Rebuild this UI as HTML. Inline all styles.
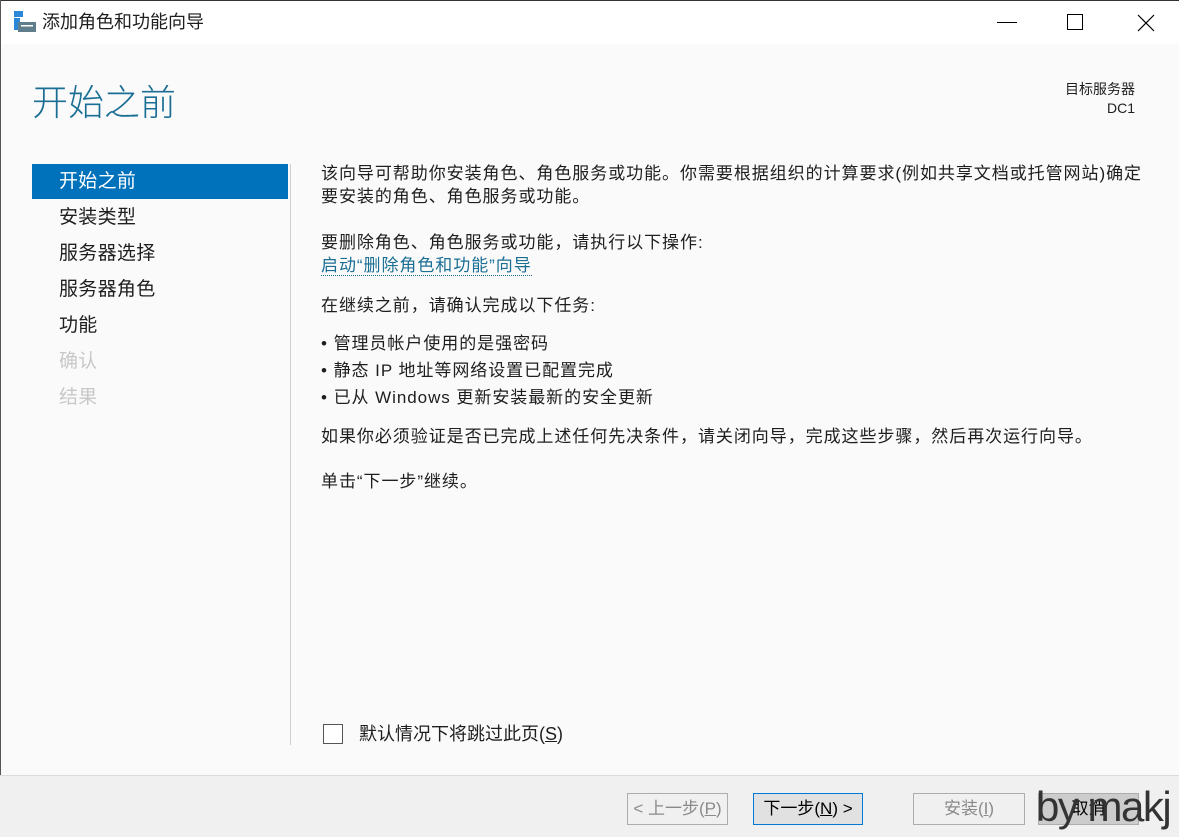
<!DOCTYPE html>
<html><head><meta charset="utf-8"><style>
*{margin:0;padding:0;box-sizing:border-box}
body{width:1179px;height:837px;position:relative;overflow:hidden;background:#fafafa;font-family:"Liberation Sans","Noto Sans CJK SC",sans-serif;color:#1e1e1e}
.a{position:absolute;white-space:nowrap}
.tb{position:absolute;left:0;top:0;width:1179px;height:44px;background:#fff;border-top:1px solid #333}
.nav{position:absolute;left:59px;font-size:19px;letter-spacing:0.3px;line-height:22px}
.t{position:absolute;left:321px;font-size:17px;letter-spacing:0.95px;line-height:20px;white-space:nowrap}
.btn{position:absolute;top:793px;height:32px;border:1px solid #adadad;background:#f0f0f0;font-size:17px;text-align:center;line-height:30px;color:#8a8a8a}
</style></head><body>
<div class="tb"></div>
<div style="position:absolute;left:0;top:0;width:1px;height:837px;background:#555"></div>
<svg class="a" style="left:13px;top:10px" width="24" height="24" viewBox="0 0 24 24"><rect x="1" y="1" width="9" height="6" fill="#2b88d8"/><rect x="1" y="8" width="6" height="12" fill="#2b88d8"/><rect x="5" y="12" width="18" height="10" fill="#607d8b"/><rect x="8" y="15" width="12" height="1.5" fill="#fff"/></svg>
<div class="a" style="left:42px;top:11px;font-size:18px;line-height:22px">添加角色和功能向导</div>
<div class="a" style="left:997px;top:22px;width:20px;height:1px;background:#000"></div>
<div class="a" style="left:1067px;top:14px;width:16px;height:16px;border:1px solid #000"></div>
<svg class="a" style="left:1137px;top:14px" width="18" height="18"><path d="M1 1L17 17M17 1L1 17" stroke="#000" stroke-width="1.2"/></svg>
<div class="a" style="left:32px;top:80px;font-size:36px;line-height:46px;color:#1a6e94;font-weight:300">开始之前</div>
<div class="a" style="right:44px;top:80px;font-size:14px;line-height:19px;text-align:right">目标服务器<br>DC1</div>
<div class="a" style="left:32px;top:164px;width:256px;height:35px;background:#0072bc"></div>
<div class="nav" style="top:171px;color:#fff">开始之前</div>
<div class="nav" style="top:207px">安装类型</div>
<div class="nav" style="top:243px">服务器选择</div>
<div class="nav" style="top:279px">服务器角色</div>
<div class="nav" style="top:315px">功能</div>
<div class="nav" style="top:351px;color:#c8c8c8">确认</div>
<div class="nav" style="top:387px;color:#c8c8c8">结果</div>
<div class="a" style="left:290px;top:164px;width:1px;height:581px;background:#cfcfcf"></div>
<div class="t" style="top:164px">该向导可帮助你安装角色、角色服务或功能。你需要根据组织的计算要求(例如共享文档或托管网站)确定</div>
<div class="t" style="top:187px">要安装的角色、角色服务或功能。</div>
<div class="t" style="top:233px">要删除角色、角色服务或功能，请执行以下操作:</div>
<div class="t" style="top:256px;color:#1a6e94;border-bottom:1px dotted #1a6e94;line-height:19px">启动“删除角色和功能”向导</div>
<div class="t" style="top:296px">在继续之前，请确认完成以下任务:</div>
<div class="t" style="top:334px">•&nbsp;管理员帐户使用的是强密码</div>
<div class="t" style="top:361px">•&nbsp;静态 IP 地址等网络设置已配置完成</div>
<div class="t" style="top:388px">•&nbsp;已从 Windows 更新安装最新的安全更新</div>
<div class="t" style="top:427px">如果你必须验证是否已完成上述任何先决条件，请关闭向导，完成这些步骤，然后再次运行向导。</div>
<div class="t" style="top:472px">单击“下一步”继续。</div>
<div class="a" style="left:323px;top:724px;width:20px;height:20px;border:1px solid #555;background:#fff"></div>
<div class="a" style="left:359px;top:723px;font-size:18px;line-height:22px">默认情况下将跳过此页(<u>S</u>)</div>
<div class="a" style="left:0;top:775px;width:1179px;height:62px;background:#f0f0f0;border-top:1px solid #dcdcdc"></div>
<div class="btn" style="left:627px;width:101px">&lt; 上一步(<u>P</u>)</div>
<div class="btn" style="left:753px;width:110px;border-color:#0078d7;background:#e1e1e1;color:#000">下一步(<u>N</u>) &gt;</div>
<div class="btn" style="left:913px;width:112px">安装(<u>I</u>)</div>
<div class="btn" style="left:1038px;width:101px;background:#ccc;color:#000">取消</div>
<div class="a" style="left:1036px;top:782px;font-size:42px;line-height:50px;color:#333;letter-spacing:-1.5px">by makj</div>
</body></html>
